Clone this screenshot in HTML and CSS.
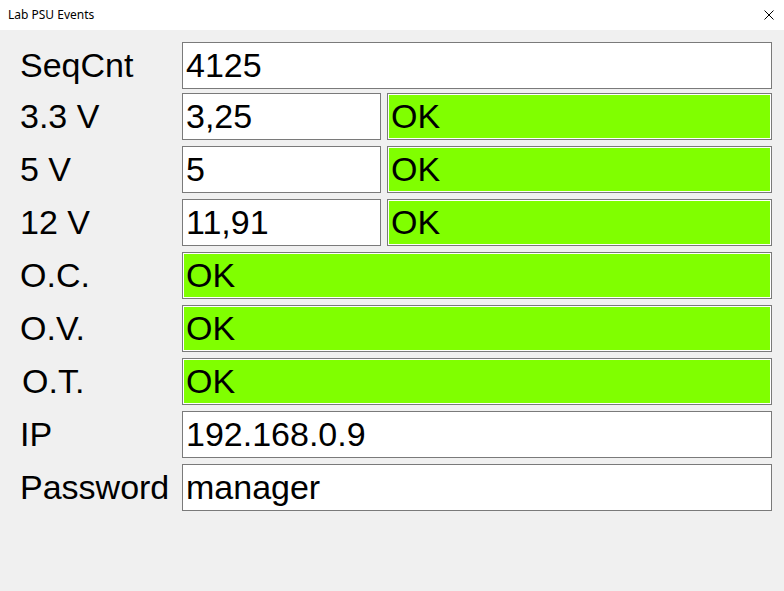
FILE: index.html
```html
<!DOCTYPE html>
<html>
<head>
<meta charset="utf-8">
<title>Lab PSU Events</title>
<link rel="stylesheet" href="styles.css">
</head>
<body>
<div class="window">
  <div class="titlebar">
    <span class="title">Lab PSU Events</span>
    <span class="close">
      <svg width="10" height="10" viewBox="0 0 10 10"><path d="M0.5 0.5 L9.5 9.5 M9.5 0.5 L0.5 9.5" stroke="#000" stroke-width="1" fill="none"/></svg>
    </span>
  </div>
  <div class="form">
    <div class="row first">
      <div class="label">SeqCnt</div>
      <div class="field wide">4125</div>
    </div>
    <div class="row">
      <div class="label">3.3 V</div>
      <div class="field narrow">3,25</div>
      <div class="field status">OK</div>
    </div>
    <div class="row">
      <div class="label">5 V</div>
      <div class="field narrow">5</div>
      <div class="field status">OK</div>
    </div>
    <div class="row">
      <div class="label">12 V</div>
      <div class="field narrow">11,91</div>
      <div class="field status">OK</div>
    </div>
    <div class="row">
      <div class="label">O.C.</div>
      <div class="field wide ok">OK</div>
    </div>
    <div class="row">
      <div class="label">O.V.</div>
      <div class="field wide ok">OK</div>
    </div>
    <div class="row">
      <div class="label shifted">O.T.</div>
      <div class="field wide ok">OK</div>
    </div>
    <div class="row">
      <div class="label">IP</div>
      <div class="field wide">192.168.0.9</div>
    </div>
    <div class="row">
      <div class="label">Password</div>
      <div class="field wide">manager</div>
    </div>
  </div>
</div>
</body>
</html>
```

FILE: styles.css
```css
html, body {
  margin: 0;
  padding: 0;
}
body {
  width: 784px;
  height: 591px;
  background: #f0f0f0;
  overflow: hidden;
  font-family: "Liberation Sans", Arial, sans-serif;
}
.window {
  display: flex;
  flex-direction: column;
}
.titlebar {
  height: 30px;
  background: #ffffff;
  display: flex;
  align-items: center;
  justify-content: space-between;
  padding: 0 10px 0 8px;
}
.title {
  font-family: "Noto Sans", "Open Sans", sans-serif;
  font-size: 12px;
  color: #000;
  margin-top: -1px;
}
.close {
  display: flex;
  width: 10px;
  height: 10px;
}
.form {
  display: flex;
  flex-direction: column;
  padding-top: 12px;
}
.row {
  display: flex;
  align-items: stretch;
  height: 47px;
  margin-top: 6px;
}
.row.first {
  margin-top: 0;
  margin-bottom: -2px;
}
.label {
  width: 162px;
  padding-left: 20px;
  font-size: 34px;
  color: #000;
  display: flex;
  align-items: center;
  padding-bottom: 1px;
  box-sizing: content-box;
}
.label.shifted {
  padding-left: 22px;
  width: 160px;
}
.field {
  box-sizing: border-box;
  height: 47px;
  border: 1px solid #7a7a7a;
  box-shadow: inset 0 0 0 1px #ffffff;
  background: #ffffff;
  font-size: 34px;
  color: #000;
  display: flex;
  align-items: center;
  padding: 0 0 1px 3px;
  white-space: nowrap;
}
.wide {
  width: 590px;
}
.narrow {
  width: 199px;
}
.status {
  width: 385px;
  margin-left: 6px;
  background: #80ff00;
}
.ok {
  background: #80ff00;
}
```
